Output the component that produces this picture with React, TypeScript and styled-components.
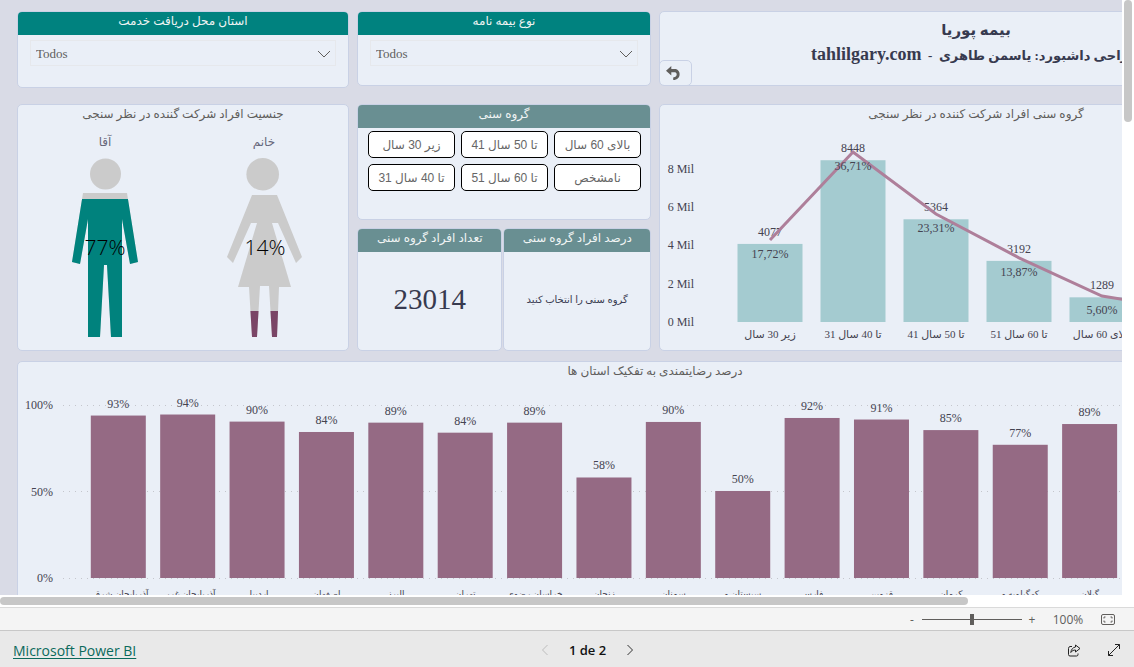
import React from "react";
import styled, { createGlobalStyle } from "styled-components";

const serif = `"Liberation Serif", "DejaVu Sans", serif`;
const ui = `"Open Sans", "Noto Sans", sans-serif`;

const GlobalStyle = createGlobalStyle`
  *, *::before, *::after { box-sizing: border-box; }
  body { margin: 0; background: #fff; font-family: ${ui}; }
  h1, h2, p { margin: 0; font-weight: 400; }
  button, input, select { font: inherit; color: inherit; margin: 0; }
`;

const Shell = styled.div`
  display: flex;
  flex-direction: column;
  height: 100vh;
  overflow: hidden;
`;

const Viewport = styled.main`
  flex: 1;
  min-height: 0;
  display: flex;
`;

const Canvas = styled.div`
  flex: 1;
  min-width: 0;
  overflow: hidden;
  background: #d9dbe6;
`;

const Report = styled.div`
  min-width: 1310px;
  padding: 11px 17px;
`;

const Columns = styled.div<{ $gap: number }>`
  display: grid;
  grid-template-columns: 332fr 294fr 634fr;
  column-gap: 8px;
  align-items: start;
  margin-bottom: ${(p) => p.$gap}px;
`;

const Stack = styled.div`
  display: flex;
  flex-direction: column;
  gap: 8px;
`;

const Pair = styled.div`
  display: grid;
  grid-template-columns: 145fr 147fr;
  gap: 1px;
`;

const Card = styled.section<{ $height: number }>`
  position: relative;
  display: flex;
  flex-direction: column;
  height: ${(p) => p.$height}px;
  border: 1px solid #c9d1e5;
  border-radius: 5px;
  background: #eaeff7;
  overflow: hidden;
`;

const CardTitle = styled.h2<{ $fill?: string }>`
  flex: none;
  height: 23px;
  font-family: ${serif};
  font-size: 12px;
  line-height: 19px;
  text-align: center;
  white-space: nowrap;
  direction: rtl;
  color: ${(p) => (p.$fill ? "#f0f4f4" : "#605e5c")};
  background: ${(p) => p.$fill || "transparent"};
`;

const SlicerBox = styled.div`
  position: relative;
  margin: 5px 12px 0;
  svg {
    position: absolute;
    right: 5px;
    top: 10px;
    pointer-events: none;
  }
`;

const Select = styled.select`
  display: block;
  appearance: none;
  width: 100%;
  height: 26px;
  padding: 0 5px;
  border: 1px solid #e6e8ec;
  border-radius: 0;
  background: transparent;
  font-family: ${serif};
  font-size: 13px;
  color: #605e5c;
`;

const Heading = styled.h1`
  padding-top: 6px;
  font-family: ${serif};
  font-weight: 700;
  line-height: 25px;
  text-align: center;
  white-space: nowrap;
  direction: rtl;
  color: #373a4f;
`;

const HeadingLine = styled.span<{ $size: number }>`
  display: block;
  height: 24px;
  font-size: ${(p) => p.$size}px;
  white-space: pre;
`;

const Site = styled.bdi`
  font-size: 18px;
`;

const BackButton = styled.button`
  position: absolute;
  left: -1px;
  bottom: -1px;
  display: grid;
  place-items: center;
  width: 33px;
  height: 26px;
  padding: 0 6px 0 0;
  border: 1px solid #c9d1e5;
  border-radius: 5px;
  background: transparent;
`;

const Choices = styled.div`
  display: grid;
  grid-template-columns: repeat(3, 1fr);
  gap: 6px;
  padding: 3px 9px 0 10px;
`;

const Choice = styled.button`
  height: 27px;
  padding: 0;
  border: 1px solid #000;
  border-radius: 5px;
  background: #fff;
  font-family: "Liberation Sans", "DejaVu Sans", sans-serif;
  font-size: 12px;
  white-space: nowrap;
  color: #666;
`;

const CardValue = styled.p<{ $size: number }>`
  flex: 1;
  display: grid;
  place-items: center;
  padding-bottom: 4px;
  font-family: ${serif};
  font-size: ${(p) => p.$size}px;
  white-space: nowrap;
  color: #373a4f;
`;

const Drawing = styled.svg`
  display: block;
  flex: none;
  text {
    font-family: ${serif};
    font-size: 12px;
    fill: #444350;
  }
  .age { font-size: 11px; }
  .province { font-size: 9px; }
  .name { font-size: 12px; fill: #66667a; }
  .share { font-family: ${ui}; font-size: 21px; font-weight: 300; fill: #000; }
`;

const VerticalBar = styled.div`
  flex: none;
  width: 12px;
  padding: 0 2px;
  background: #fff;
  &::before {
    content: "";
    display: block;
    height: 122px;
    border-radius: 4px;
    background: #c7c7c7;
  }
`;

const HorizontalBar = styled.div`
  flex: none;
  height: 12px;
  padding: 2px 0;
  background: #fff;
  &::before {
    content: "";
    display: block;
    width: 968px;
    max-width: 86%;
    height: 8px;
    border-radius: 4px;
    background: #c7c7c7;
  }
`;

const ZoomBar = styled.div`
  flex: none;
  display: flex;
  align-items: center;
  justify-content: flex-end;
  height: 24px;
  padding-right: 16px;
  border-top: 1px solid #dadada;
  border-bottom: 1px solid #c8c8c8;
  background: #f4f4f4;
  font-size: 12px;
  color: #605e5c;
`;

const PlainButton = styled.button`
  display: grid;
  place-items: center;
  width: 20px;
  height: 20px;
  padding: 0;
  border: 0;
  background: transparent;
  svg { display: block; }
`;

const ZoomSlider = styled.input`
  appearance: none;
  width: 100px;
  height: 12px;
  background: linear-gradient(#605e5c, #605e5c) center / 100% 1px no-repeat;
  &::-webkit-slider-thumb {
    appearance: none;
    width: 4px;
    height: 11px;
    background: #605e5c;
  }
`;

const ZoomValue = styled.output`
  width: 40px;
  margin: 0 10px 0 6px;
  text-align: center;
`;

const Footer = styled.footer`
  flex: none;
  display: grid;
  grid-template-columns: 1fr auto 1fr;
  align-items: center;
  height: 36px;
  padding: 2px 10px 0 13px;
  background: #e9e9e9;
  font-size: 13px;
`;

const BrandLink = styled.a`
  justify-self: start;
  font-size: 14px;
  color: #0b6a5c;
  text-underline-offset: 2px;
`;

const Pager = styled.nav`
  display: flex;
  align-items: center;
  gap: 14px;
  margin-left: 38px;
  font-weight: 600;
  color: #111;
`;

const Actions = styled.div`
  display: flex;
  justify-self: end;
  gap: 20px;
`;

function Slicer({ title, height }: { title: string; height: number }) {
  return (
    <Card $height={height}>
      <CardTitle $fill="#00827f">{title}</CardTitle>
      <SlicerBox>
        <Select aria-label={title} defaultValue="Todos">
          <option>Todos</option>
        </Select>
        <svg width="14" height="9" fill="none" stroke="#605e5c">
          <path d="M1 1l6 6 6-6" />
        </svg>
      </SlicerBox>
    </Card>
  );
}

const MAN =
  "M66 89H110L121 158 113 160 105 115V233H94L90 161H87L83 233H71V115L63 160 55 158Z";
const WOMAN =
  "M235 91H260L285 153 279 159 261 119H255L274 183H262L260 233H255L252 182H243L240 233H235L232 183H221L240 119H234L216 159 210 153Z";

function GenderChart() {
  return (
    <Drawing width="331" height="222" viewBox="1 24 331 222">
      <clipPath id="man-share">
        <rect x="50" y="95" width="76" height="140" />
      </clipPath>
      <clipPath id="woman-share">
        <rect x="205" y="207" width="85" height="30" />
      </clipPath>
      <text className="name" x="88" y="42" textAnchor="middle">آقا</text>
      <text className="name" x="247" y="42" textAnchor="middle">خانم</text>
      <g fill="#cbcbcb">
        <circle cx="88.5" cy="70" r="15.5" />
        <path d={MAN} />
        <circle cx="245.7" cy="70.3" r="16.3" />
        <path d={WOMAN} />
      </g>
      <path d={MAN} fill="#00827d" clipPath="url(#man-share)" />
      <path d={WOMAN} fill="#7a4566" clipPath="url(#woman-share)" />
      <text className="share" x="88" y="151" textAnchor="middle">77%</text>
      <text className="share" x="248" y="151" textAnchor="middle">14%</text>
    </Drawing>
  );
}

const AGES = [
  { name: "زیر 30 سال", count: 4077, share: 17.72 },
  { name: "31 تا 40 سال", count: 8448, share: 36.71 },
  { name: "41 تا 50 سال", count: 5364, share: 23.31 },
  { name: "51 تا 60 سال", count: 3192, share: 13.87 },
  { name: "بالای 60 سال", count: 1289, share: 5.6 },
  { name: "نامشخص", count: 644, share: 2.8 },
];

/* Keeps a leading number at the left of the Persian words that follow it. */
const ltrAge = (name: string) => {
  const m = name.match(/^(\d+) (.*)$/);
  return m ? `\u200e${m[1]} \u2067${m[2]}\u2069` : name;
};

function AgeChart() {
  const base = 217;
  const x = (i: number) => 110 + i * 83;
  const lineY = (s: number) => base - s * 4.63;
  const top = (c: number) => base - (c / 1000) * 19.15;
  return (
    <Drawing width="632" height="222" viewBox="0 23 632 222">
      {[0, 2, 4, 6, 8].map((v) => (
        <text key={v} x="34" y={base + 4 - v * 19.15} textAnchor="end">{`${v} Mil`}</text>
      ))}
      {AGES.map((a, i) => (
        <g key={a.name}>
          <rect x={x(i) - 32.5} y={top(a.count)} width="65" height={base - top(a.count)} fill="#a4cbd0" />
          <text x={x(i)} y={top(a.count) - 8} textAnchor="middle">{a.count}</text>
          <text className="age" x={x(i)} y={base + 16} textAnchor="middle">{ltrAge(a.name)}</text>
        </g>
      ))}
      <polyline
        points={AGES.map((a, i) => `${x(i)},${lineY(a.share)}`).join(" ")}
        fill="none"
        stroke="#ae7f9a"
        strokeWidth="3"
      />
      {AGES.map((a, i) => (
        <text key={a.name} x={x(i)} y={lineY(a.share) + 18} textAnchor="middle">
          {`${a.share.toFixed(2).replace(".", ",")}%`}
        </text>
      ))}
    </Drawing>
  );
}

const PROVINCES: [string, number][] = [
  ["آذربایجان شرقی", 93.9], ["آذربایجان غربی", 94.5], ["اردبیل", 90.4],
  ["اصفهان", 84.4], ["البرز", 89.8], ["تهران", 84.0], ["خراسان رضوی", 89.8],
  ["زنجان", 58.1], ["سمنان", 90.2], ["سیستان و", 50.3], ["فارس", 92.5],
  ["قزوین", 91.6], ["کرمان", 85.5], ["کهگیلویه و", 77.0], ["گیلان", 89.0],
];

function ProvinceChart() {
  const base = 216;
  const x = (i: number) => 100.3 + i * 69.38;
  const h = (v: number) => v * 1.73;
  return (
    <Drawing width="1274" height="240" viewBox="0 23 1274 240">
      {[0, 50, 100].map((v) => (
        <g key={v}>
          <text x="35" y={base + 4 - h(v)} textAnchor="end">{`${v}%`}</text>
          <line
            x1="45" x2="1260" y1={Math.floor(base - h(v)) + 0.5} y2={Math.floor(base - h(v)) + 0.5}
            stroke="#c4c6cc" strokeDasharray="1 5"
          />
        </g>
      ))}
      {PROVINCES.map(([name, v], i) => (
        <g key={name}>
          <rect x={x(i) - 27.5} y={base - h(v)} width="55" height={h(v)} fill="#956a84" />
          <text x={x(i)} y={base - h(v) - 8} textAnchor="middle">{`${Math.floor(v)}%`}</text>
          <text className="province" x={x(i)} y={base + 19} textAnchor="middle">{name}</text>
        </g>
      ))}
    </Drawing>
  );
}

export default function App() {
  return (
    <Shell>
      <GlobalStyle />
      <Viewport>
        <Canvas>
          <Report>
            <Columns $gap={16}>
              <Slicer title="استان محل دریافت خدمت" height={77} />
              <Slicer title="نوع بیمه نامه" height={75} />
              <Card $height={75}>
                <Heading>
                  <HeadingLine $size={15}>بیمه پوریا</HeadingLine>
                  <HeadingLine $size={13}>
                    {"طراحی داشبورد: یاسمن طاهری  -  "}
                    <Site>tahlilgary.com</Site>
                  </HeadingLine>
                </Heading>
                <BackButton aria-label="بازگشت">
                  <svg width="14" height="14" viewBox="0 0 14 14">
                    <path
                      fill="#605e5c"
                      d="M0 4.8L5.3 0V3H8.2C11.6 3 13.6 5 13.6 8.2 13.6 11.4 11.4 14 7.2 14V11.4C9.6 11.4 10.7 10 10.7 8.3 10.7 6.8 9.8 6.2 8 6.2H5.3V9.4Z"
                    />
                  </svg>
                </BackButton>
              </Card>
            </Columns>
            <Columns $gap={10}>
              <Card $height={247}>
                <CardTitle>جنسیت افراد شرکت گننده در نظر سنجی</CardTitle>
                <GenderChart />
              </Card>
              <Stack>
                <Card $height={116}>
                  <CardTitle $fill="#698f92">گروه سنی</CardTitle>
                  <Choices>
                    <Choice>زیر 30 سال</Choice>
                    <Choice>{ltrAge("41 تا 50 سال")}</Choice>
                    <Choice>بالای 60 سال</Choice>
                    <Choice>{ltrAge("31 تا 40 سال")}</Choice>
                    <Choice>{ltrAge("51 تا 60 سال")}</Choice>
                    <Choice>نامشخص</Choice>
                  </Choices>
                </Card>
                <Pair>
                  <Card $height={123}>
                    <CardTitle $fill="#698f92">تعداد افراد گروه سنی</CardTitle>
                    <CardValue $size={29}>23014</CardValue>
                  </Card>
                  <Card $height={123}>
                    <CardTitle $fill="#698f92">درصد افراد گروه سنی</CardTitle>
                    <CardValue $size={10}>گروه سنی را انتخاب کنید</CardValue>
                  </Card>
                </Pair>
              </Stack>
              <Card $height={247}>
                <CardTitle>گروه سنی افراد شرکت کننده در نظر سنجی</CardTitle>
                <AgeChart />
              </Card>
            </Columns>
            <Card $height={270}>
              <CardTitle>درصد رضایتمندی به تفکیک استان ها</CardTitle>
              <ProvinceChart />
            </Card>
          </Report>
        </Canvas>
        <VerticalBar />
      </Viewport>
      <HorizontalBar />
      <ZoomBar>
        <PlainButton aria-label="Alejar">-</PlainButton>
        <ZoomSlider type="range" aria-label="Zoom" min={0} max={100} defaultValue={50} />
        <PlainButton aria-label="Acercar">+</PlainButton>
        <ZoomValue>100%</ZoomValue>
        <PlainButton aria-label="Ajustar a la página">
          <svg width="15" height="11" fill="none" stroke="#605e5c">
            <rect x="0.5" y="0.5" width="13" height="10" rx="1.5" />
            <path d="M3 4.5V3H4.5M9.5 3H11V4.5M11 6.5V8H9.5M4.5 8H3V6.5" />
          </svg>
        </PlainButton>
      </ZoomBar>
      <Footer>
        <BrandLink href="#powerbi">Microsoft Power BI</BrandLink>
        <Pager aria-label="Páginas">
          <PlainButton aria-label="Página anterior" disabled>
            <svg width="8" height="12" fill="none" stroke="#bdbdbd">
              <path d="M6.5 1L1.5 6l5 5" />
            </svg>
          </PlainButton>
          <span>1 de 2</span>
          <PlainButton aria-label="Página siguiente">
            <svg width="8" height="12" fill="none" stroke="#333">
              <path d="M1.5 1l5 5-5 5" />
            </svg>
          </PlainButton>
        </Pager>
        <Actions>
          <PlainButton aria-label="Compartir">
            <svg width="14" height="13" fill="none" stroke="#222">
              <path d="M5 2.5H3A2 2 0 0 0 1.5 4.500V10.5A1.5 1.5 0 0 0 3 12H9.5A1.5 1.5 0 0 0 11 10.5V9.5" />
              <path d="M8.5 1L13 4.5 8.5 8V6C6.5 6 5 6.7 3.8 8.5 4.2 5.5 5.8 3.4 8.5 3Z" strokeLinejoin="round" />
            </svg>
          </PlainButton>
          <PlainButton aria-label="Pantalla completa">
            <svg width="14" height="14" fill="none" stroke="#222">
              <path d="M1.5 12.5l11-11M8 1.5h4.5V6M1.5 8v4.5H6" />
            </svg>
          </PlainButton>
        </Actions>
      </Footer>
    </Shell>
  );
}
